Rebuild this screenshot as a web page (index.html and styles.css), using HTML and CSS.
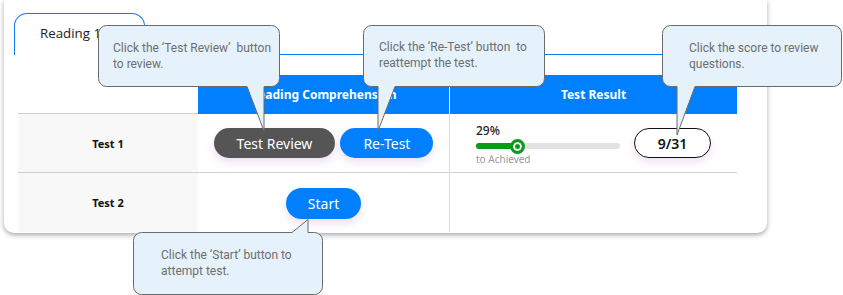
FILE: index.html
```html
<!DOCTYPE html>
<html lang="en">
<head>
    <meta charset="UTF-8">
    <meta name="viewport" content="width=device-width, initial-scale=1.0">
    <title>Reading Tests</title>
    <link rel="stylesheet" href="styles.css">
</head>
<body>
    <div class="card">
        <div class="tabs">
            <div class="tab">Reading 1</div>
            <div class="tab-line"></div>
        </div>

        <div class="table">
            <div class="cell head blank"></div>
            <div class="cell head">Reading Comprehension</div>
            <div class="cell head last">Test Result</div>

            <div class="cell name first-row">Test 1</div>
            <div class="cell">
                <button class="btn dark">Test Review</button>
                <button class="btn blue">Re-Test</button>
            </div>
            <div class="cell last result">
                <div class="progress">
                    <div class="pct">29%</div>
                    <div class="bar">
                        <div class="fill" style="width: 29%"></div>
                        <div class="knob" style="left: 29%"></div>
                    </div>
                    <div class="note">to Achieved</div>
                </div>
                <button class="score">9/31</button>
            </div>

            <div class="cell name bottom">Test 2</div>
            <div class="cell bottom">
                <button class="btn blue">Start</button>
            </div>
            <div class="cell last bottom"></div>
        </div>
    </div>

    <!-- help bubbles -->
    <div class="tip tip-review">
        <svg width="183" height="108"><path d="M8.5,0.5 H173.5 A8,8 0 0 1 181.5,8.5 V53.5 A8,8 0 0 1 173.5,61.5 H166 V106 L149,61.5 H8.5 A8,8 0 0 1 0.5,53.5 V8.5 A8,8 0 0 1 8.5,0.5 Z"/></svg>
        <p>Click the ‘Test Review’&nbsp; button<br>to review.</p>
    </div>
    <div class="tip tip-retest">
        <svg width="183" height="108"><path d="M8.5,0.5 H173.5 A8,8 0 0 1 181.5,8.5 V53.5 A8,8 0 0 1 173.5,61.5 H32 L15,106 V61.5 H8.5 A8,8 0 0 1 0.5,53.5 V8.5 A8,8 0 0 1 8.5,0.5 Z"/></svg>
        <p>Click the ‘Re-Test’ button&nbsp; to<br>reattempt the test.</p>
    </div>
    <div class="tip tip-score">
        <svg width="181" height="112"><path d="M8.5,0.5 H171.5 A8,8 0 0 1 179.5,8.5 V53.5 A8,8 0 0 1 171.5,61.5 H33 L15,110 V61.5 H8.5 A8,8 0 0 1 0.5,53.5 V8.5 A8,8 0 0 1 8.5,0.5 Z"/></svg>
        <p>Click the score to review<br>questions.</p>
    </div>
    <div class="tip tip-start">
        <svg width="191" height="77"><path d="M8.5,13.5 H159 L175,0.5 V13.5 H181.5 A8,8 0 0 1 189.5,21.5 V67.5 A8,8 0 0 1 181.5,75.5 H8.5 A8,8 0 0 1 0.5,67.5 V21.5 A8,8 0 0 1 8.5,13.5 Z"/></svg>
        <p>Click the ‘Start’ button to<br>attempt test.</p>
    </div>
</body>
</html>
```

FILE: styles.css
```css
body {
    margin: 0;
    background: #fff;
    font-family: "Noto Sans", "DejaVu Sans", sans-serif;
    position: relative;
    height: 295px;
    overflow: hidden;
}

.card {
    margin-left: 4px;
    width: 763px;
    height: 233px;
    background: #fff;
    border-radius: 0 0 10px 10px;
    box-shadow: 0 2px 5px rgba(0, 0, 0, 0.35);
    padding: 12px 0 0 10px;
    box-sizing: border-box;
}

.tabs {
    display: flex;
    align-items: flex-end;
    height: 43px;
}

.tab {
    width: 131px;
    height: 42px;
    box-sizing: border-box;
    border: 1px solid #0a7cf5;
    border-bottom: none;
    border-radius: 13px 13px 0 0;
    padding: 10px 0 0 25px;
    font-family: "Open Sans", sans-serif;
    font-size: 13.3px;
    color: #222;
}

.tab-line {
    flex: 1;
    margin-right: 10px;
    border-bottom: 1px solid #0a7cf5;
}

.table {
    display: grid;
    grid-template-columns: 180px 252px 287px;
    grid-template-rows: 39px 59px 59px;
    margin: 20px 0 0 4px;
}

.cell {
    display: flex;
    align-items: center;
    justify-content: center;
    gap: 5px;
    border-right: 1px solid #dcdcdc;
    border-bottom: 1px solid #cfcfcf;
}

.cell.last {
    border-right: none;
}

.cell.bottom {
    border-bottom: none;
}

.head {
    background: #0080ff;
    color: #fff;
    font-size: 12px;
    font-weight: bold;
    border-right: 1px solid #fff;
    border-bottom: none;
}

.head.blank {
    background: #fff;
    border-right: none;
    border-bottom: 1px solid #cfcfcf;
}

.name {
    background: #f8f8f8;
    font-size: 11px;
    font-weight: bold;
    color: #111;
    border-right: none;
}

.btn {
    border: none;
    border-radius: 16px;
    height: 30px;
    padding: 0 23px;
    font-family: "Noto Sans", sans-serif;
    font-size: 14px;
    color: #fff;
    box-shadow: 0 4px 8px rgba(200, 160, 220, 0.35);
    cursor: pointer;
}

.btn.dark {
    background: #555;
}

.btn.blue {
    background: #0080ff;
}

.cell.bottom .btn {
    height: 31px;
    padding: 0 22px;
    margin-top: 2px;
}

.result {
    gap: 14px;
}

.progress {
    width: 144px;
    padding-top: 3px;
}

.pct {
    font-size: 12px;
    font-weight: 500;
    color: #222;
    line-height: 14px;
}

.bar {
    position: relative;
    height: 6px;
    margin: 5px 0 4px;
    background: #e2e2e2;
    border-radius: 3px;
}

.fill {
    height: 100%;
    background: #0a9a1e;
    border-radius: 3px;
}

.knob {
    position: absolute;
    top: 50%;
    width: 9px;
    height: 9px;
    margin: -7.5px 0 0 -7.5px;
    border: 3px solid #0a9a1e;
    border-radius: 50%;
    background: #0a9a1e;
    box-shadow: inset 0 0 0 2px #fff;
}

.note {
    font-size: 10px;
    color: #999;
    line-height: 12px;
}

.score {
    width: 77px;
    height: 30px;
    border: 1px solid #111;
    border-radius: 15px;
    background: #fff;
    font-family: "Noto Sans", sans-serif;
    font-size: 14px;
    font-weight: 600;
    color: #111;
    box-shadow: 0 4px 8px rgba(200, 160, 220, 0.3);
}

.tip {
    position: absolute;
}

.tip svg {
    display: block;
}

.tip path {
    fill: #e5f2fc;
    stroke: #6b6b6b;
    stroke-width: 1;
}

.tip p {
    position: absolute;
    margin: 0;
    font-family: Roboto, sans-serif;
    font-size: 12px;
    line-height: 16px;
    color: #6e6e6e;
    white-space: nowrap;
}

.tip-review {
    left: 98px;
    top: 25px;
}

.tip-review p {
    left: 15px;
    top: 15px;
}

.tip-retest {
    left: 363px;
    top: 25px;
}

.tip-retest p {
    left: 16px;
    top: 14px;
}

.tip-score {
    left: 662px;
    top: 25px;
}

.tip-score p {
    left: 27px;
    top: 15px;
}

.tip-start {
    left: 133px;
    top: 219px;
}

.tip-start p {
    left: 28px;
    top: 28px;
}
```
